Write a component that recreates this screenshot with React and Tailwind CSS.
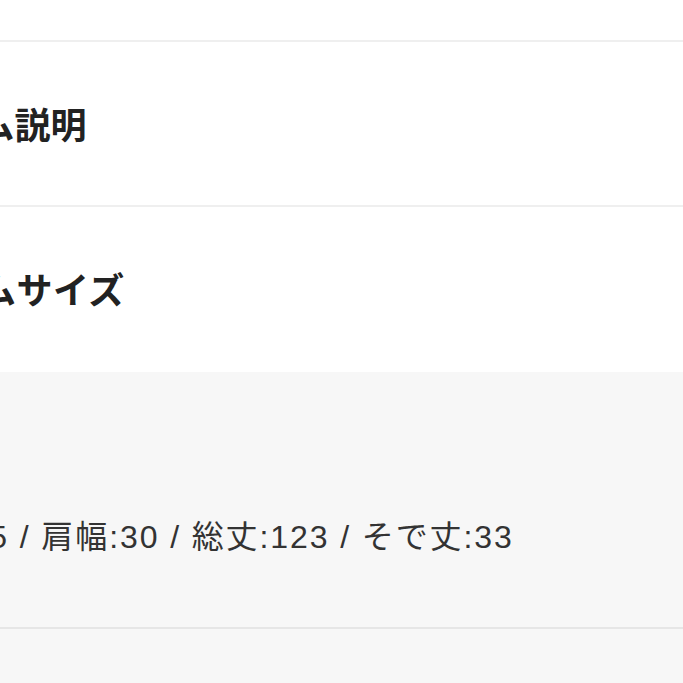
export default function App() {
  return (
    <div
      className="w-[683px] h-[683px] overflow-hidden bg-white text-[#222]"
      style={{ fontFamily: '"Liberation Sans", "Noto Sans CJK JP", sans-serif' }}
    >
      <div className="h-[40px] bg-white" />
      <div className="h-[2px] bg-[#efefef]" />

      {/* 説明 */}
      <div className="h-[163px] flex items-center pt-[6px]">
        <h2 className="ml-[-126px] whitespace-nowrap text-[36px] font-bold leading-none text-[#222]">
          アイテム説明
        </h2>
      </div>
      <div className="h-[2px] bg-[#efefef]" />

      {/* サイズ */}
      <div className="h-[165px] flex items-center pt-[4px]">
        <h2 className="ml-[-126px] whitespace-nowrap text-[36px] font-bold leading-none tracking-[0.5px] text-[#222]">
          アイテムサイズ
        </h2>
      </div>

      <div className="bg-[#f7f7f7]">
        <div className="h-[255px] flex items-end pb-[74px]">
          <p className="ml-[-109px] whitespace-nowrap text-[32px] leading-none tracking-[1.9px] text-[#333]">
            身幅:45 / 肩幅:30 / 総丈:123 / そで丈:33
          </p>
        </div>
        <div className="h-[2px] bg-[#e6e6e6]" />
        <div className="h-[54px]" />
      </div>
    </div>
  );
}
